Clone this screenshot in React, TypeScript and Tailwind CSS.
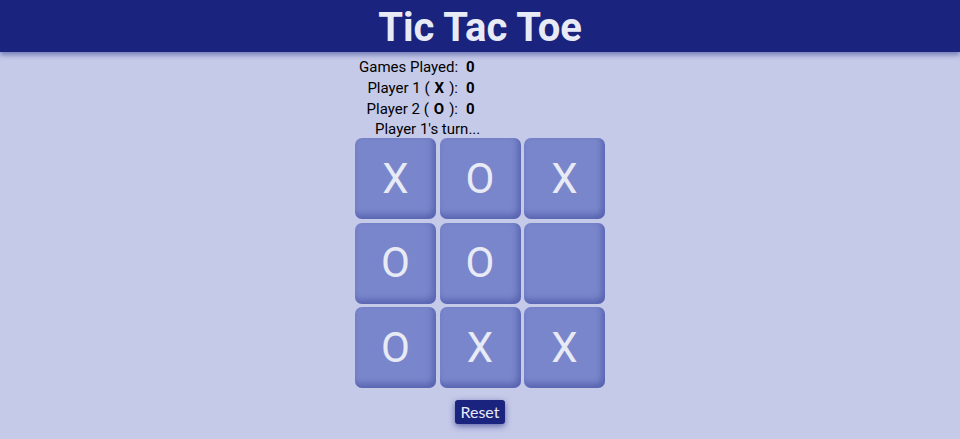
const board = ["X", "O", "X", "O", "O", "", "O", "X", "X"];

export default function App() {
  return (
    <div className="min-h-screen bg-[#c5cae9] font-['Roboto',sans-serif] text-black">
      <header className="h-[52px] bg-[#1a237e] flex items-center justify-center pt-[3px] shadow-[0_3px_5px_rgba(26,35,126,0.45)] relative z-10">
        <h1 className="text-[40px] font-bold text-[#e8eaf6] leading-none">Tic Tac Toe</h1>
      </header>

      <main className="flex flex-col items-center">
        <div className="w-[250px] pt-[5px]">
          <div className="grid grid-cols-[99px_auto] gap-x-[8px] pl-[4px] text-[15px] leading-[21px]">
            <span className="text-right whitespace-nowrap">Games Played:</span>
            <span className="font-bold">0</span>
            <span className="text-right whitespace-nowrap">
              Player 1 (<b className="mx-[5px]">X</b>):
            </span>
            <span className="font-bold">0</span>
            <span className="text-right whitespace-nowrap">
              Player 2 (<b className="mx-[5px]">O</b>):
            </span>
            <span className="font-bold">0</span>
          </div>
          <p className="pl-[20px] text-[15px] leading-[19px] -mb-[1px]">Player 1's turn...</p>
        </div>

        <div className="grid grid-cols-[81px_81px_81px] gap-[3.5px]">
          {board.map((cell, i) => (
            <button
              key={i}
              className="h-[81px] w-[81px] rounded-[7px] bg-[#7986cb] text-[#e8eaf6] text-[42px] leading-none font-normal shadow-[inset_-3px_-4px_6px_rgba(26,35,126,0.35)] flex items-center justify-center"
            >
              {cell}
            </button>
          ))}
        </div>

        <button className="mt-[12px] h-[24px] px-[5px] rounded-[3px] bg-[#1a237e] text-[#e8eaf6] text-[16px] leading-none font-['Lato',sans-serif] shadow-[0_2px_6px_rgba(26,35,126,0.6)]">
          Reset
        </button>
      </main>
    </div>
  );
}
